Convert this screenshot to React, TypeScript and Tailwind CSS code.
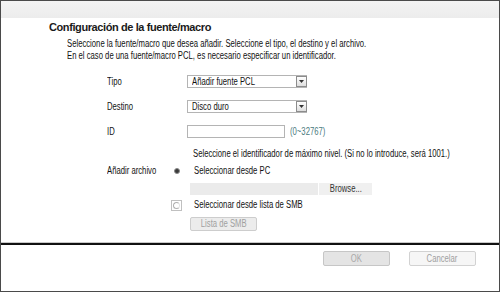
import React from "react";

const sans = { fontFamily: '"Liberation Sans", Arial, sans-serif' };

function N({ children, center }: { children: React.ReactNode; center?: boolean }) {
  return (
    <span
      className={
        center
          ? "inline-block origin-center scale-x-[0.77] whitespace-nowrap"
          : "inline-block origin-left scale-x-[0.77] whitespace-nowrap"
      }
    >
      {children}
    </span>
  );
}

function Select({ value }: { value: string }) {
  return (
    <div className="relative flex h-[13px] w-[120px] items-center border border-[#b4b4b4] bg-white">
      <span className="pl-[4px] leading-[11px] text-[#111]">
        <N>{value}</N>
      </span>
      <div className="ml-auto mr-[-1px] flex h-[11px] w-[11px] items-center justify-center border border-[#8c8c8c] bg-gradient-to-b from-white to-[#dedede]">
        <svg width="5" height="3" viewBox="0 0 5 3">
          <path d="M0 0 H5 L2.5 3 Z" fill="#333" />
        </svg>
      </div>
    </div>
  );
}

export default function App() {
  return (
    <div
      className="flex h-[292px] w-[500px] flex-col overflow-hidden border border-[#4a4a4a] bg-white text-[10px] leading-[12px] text-[#111]"
      style={sans}
    >
      <div className="h-[17px] bg-gradient-to-b from-[#f3f3f3] to-[#ececec]" />

      <div className="mt-[2px] pl-[48px] text-[11px] font-bold leading-[14px] tracking-[-0.4px] text-[#1a1a1a] whitespace-nowrap">
        Configuración de la fuente/macro
      </div>

      <div className="mt-[4px] flex flex-col pl-[66px]">
        <N>Seleccione la fuente/macro que desea añadir. Seleccione el tipo, el destino y el archivo.</N>
        <N>En el caso de una fuente/macro PCL, es necesario especificar un identificador.</N>
      </div>

      <div className="mt-[13px] flex items-center pl-[106px]">
        <span className="w-[80px]">
          <N>Tipo</N>
        </span>
        <Select value="Añadir fuente PCL" />
      </div>

      <div className="mt-[12px] flex items-center pl-[106px]">
        <span className="w-[80px]">
          <N>Destino</N>
        </span>
        <Select value="Disco duro" />
      </div>

      <div className="mt-[12px] flex items-center pl-[106px]">
        <span className="w-[80px]">
          <N>ID</N>
        </span>
        <div className="h-[13px] w-[98px] border border-[#b4b4b4] bg-white" />
        <span className="ml-[5px] text-[#4a7a80]">
          <N>(0~32767)</N>
        </span>
      </div>

      <div className="mt-[10px] pl-[192px]">
        <N>Seleccione el identificador de máximo nivel. (Si no lo introduce, será 1001.)</N>
      </div>

      <div className="mt-[5px] flex h-[12px] items-center pl-[106px]">
        <span className="w-[64px]">
          <N>Añadir archivo</N>
        </span>
        <span className="flex h-[11px] w-[11px] items-center justify-center">
          <span className="h-[6px] w-[6px] rounded-full border border-[#8a8a8a] bg-[#3a3a3a]" />
        </span>
        <span className="ml-[12px]">
          <N>Seleccionar desde PC</N>
        </span>
      </div>

      <div className="mt-[6px] flex h-[12px] pl-[189px]">
        <div className="w-[128px] bg-[#ebebeb]" />
        <div className="flex w-[54px] items-center justify-center border-l border-white bg-[#f0f0f0] text-[#333]">
          <N center>Browse...</N>
        </div>
      </div>

      <div className="mt-[4px] flex h-[12px] items-center pl-[170px]">
        <span className="flex h-[11px] w-[11px] items-center justify-center border border-[#c0c0c0] bg-white">
          <span className="h-[7px] w-[7px] rounded-full border border-[#b0b0b0] border-r-[#e4e4e4]" />
        </span>
        <span className="ml-[12px]">
          <N>Seleccionar desde lista de SMB</N>
        </span>
      </div>

      <div className="mt-[6px] pl-[189px]">
        <div className="flex h-[14px] w-[67px] items-center justify-center rounded-[2px] border border-[#cdcdcd] bg-[#ececec] text-[#a0a0a0]">
          <N center>Lista de SMB</N>
        </div>
      </div>

      <div className="mt-[11px] h-[1px] bg-[#c8c8c8]" />
      <div className="h-[2px] bg-[#111]" />

      <div className="flex pl-[322px] pt-[6px]">
        <div className="flex h-[15px] w-[67px] items-center justify-center rounded-[2px] border border-[#c6c6c6] bg-[#e4e4e4] text-[#a8a8a8]">
          <N center>OK</N>
        </div>
        <div className="ml-[19px] flex h-[15px] w-[67px] items-center justify-center rounded-[2px] border border-[#d2d2d2] bg-[#f6f6f6] text-[#a0a0a0]">
          <N center>Cancelar</N>
        </div>
      </div>
    </div>
  );
}
